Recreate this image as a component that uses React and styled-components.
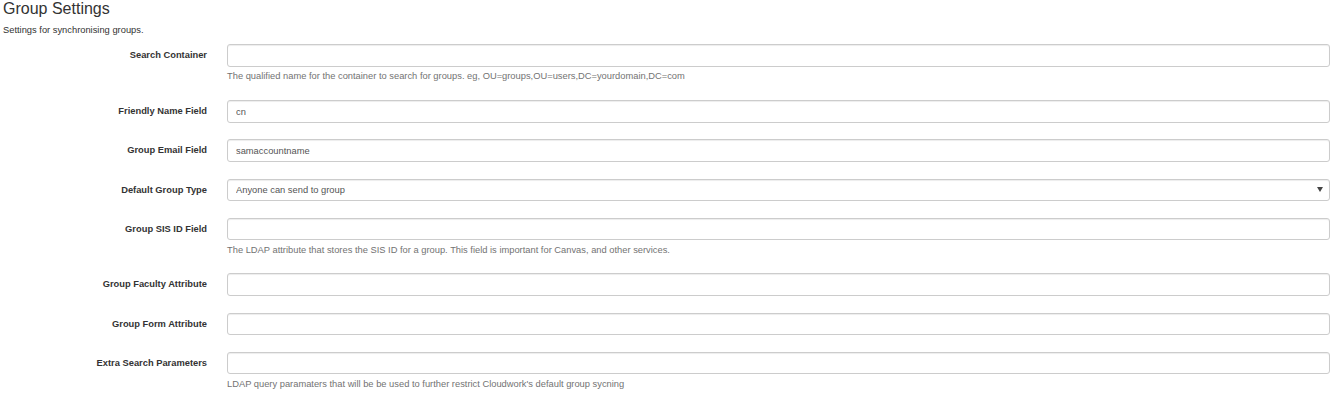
import React from 'react'
import styled, { createGlobalStyle } from 'styled-components'

const GlobalStyle = createGlobalStyle`
  html, body {
    margin: 0;
    padding: 0;
    background: #fff;
    overflow: hidden;
  }
  body {
    font-family: "Liberation Sans", Arial, sans-serif;
    font-size: 9.33px;
    line-height: 13.33px;
    color: #333;
  }
`

const Page = styled.div`
  padding: 0 11px 0 3px;
`

const Title = styled.h3`
  margin: 0 0 6.67px;
  font-size: 16px;
  line-height: 17.6px;
  font-weight: 400;
  color: #333;
`

const Intro = styled.p`
  margin: 0 0 6.8px;
  font-size: 9.33px;
  line-height: 13.33px;
`

const Form = styled.form`
  display: flex;
  flex-direction: column;
  gap: 16.5px;
`

const Row = styled.div`
  display: grid;
  grid-template-columns: 204px 1fr;
  column-gap: 20px;
  align-items: start;
`

const Label = styled.label`
  padding-top: 5px;
  text-align: right;
  font-weight: 700;
  font-size: 9.33px;
  line-height: 13.33px;
  color: #333;
`

const Field = styled.div`
  display: flex;
  flex-direction: column;
  min-width: 0;
`

const Input = styled.input`
  box-sizing: border-box;
  width: 100%;
  height: 22.67px;
  margin: 0;
  padding: 0 8px;
  border: 1px solid #ccc;
  border-radius: 3px;
  background: #fff;
  box-shadow: inset 0 1px 1px rgba(0, 0, 0, 0.075);
  font-family: "Liberation Sans", Arial, sans-serif;
  font-size: 9.33px;
  color: #555;
  outline: none;
`

const SelectWrap = styled.div`
  position: relative;
`

const Select = styled.select`
  box-sizing: border-box;
  width: 100%;
  height: 22.67px;
  margin: 0;
  padding: 0 24px 0 8px;
  border: 1px solid #ccc;
  border-radius: 3px;
  background: #fff;
  box-shadow: inset 0 1px 1px rgba(0, 0, 0, 0.075);
  appearance: none;
  font-family: "Liberation Sans", Arial, sans-serif;
  font-size: 9.33px;
  color: #555;
  outline: none;
`

const Arrow = styled.svg`
  position: absolute;
  right: 7px;
  top: 8.5px;
  width: 6px;
  height: 5px;
  pointer-events: none;
`

const Help = styled.span`
  display: block;
  margin-top: 3.33px;
  font-size: 9.33px;
  line-height: 13.33px;
  color: #737373;
`

const fields = [
  {
    label: 'Search Container',
    help: 'The qualified name for the container to search for groups. eg, OU=groups,OU=users,DC=yourdomain,DC=com',
  },
  { label: 'Friendly Name Field', value: 'cn' },
  { label: 'Group Email Field', value: 'samaccountname' },
  { label: 'Default Group Type', select: ['Anyone can send to group'] },
  {
    label: 'Group SIS ID Field',
    help: 'The LDAP attribute that stores the SIS ID for a group. This field is important for Canvas, and other services.',
  },
  { label: 'Group Faculty Attribute' },
  { label: 'Group Form Attribute' },
  {
    label: 'Extra Search Parameters',
    help: "LDAP query paramaters that will be be used to further restrict Cloudwork's default group sycning",
  },
]

const GroupSettings = () => {
  return (
    <Page>
      <Title>Group Settings</Title>
      <Intro>Settings for synchronising groups.</Intro>
      <Form onSubmit={(e) => e.preventDefault()}>
        {fields.map((f, i) => (
          <Row key={f.label}>
            <Label htmlFor={`gs-${i}`}>{f.label}</Label>
            <Field>
              {f.select ? (
                <SelectWrap>
                  <Select id={`gs-${i}`} defaultValue={f.select[0]}>
                    {f.select.map((o) => (
                      <option key={o}>{o}</option>
                    ))}
                  </Select>
                  <Arrow viewBox="0 0 6 5">
                    <path d="M0 0 H6 L3 5 Z" fill="#444" />
                  </Arrow>
                </SelectWrap>
              ) : (
                <Input id={`gs-${i}`} type="text" defaultValue={f.value || ''} />
              )}
              {f.help && <Help>{f.help}</Help>}
            </Field>
          </Row>
        ))}
      </Form>
    </Page>
  )
}

export default function App() {
  return (
    <>
      <GlobalStyle />
      <GroupSettings />
    </>
  )
}
